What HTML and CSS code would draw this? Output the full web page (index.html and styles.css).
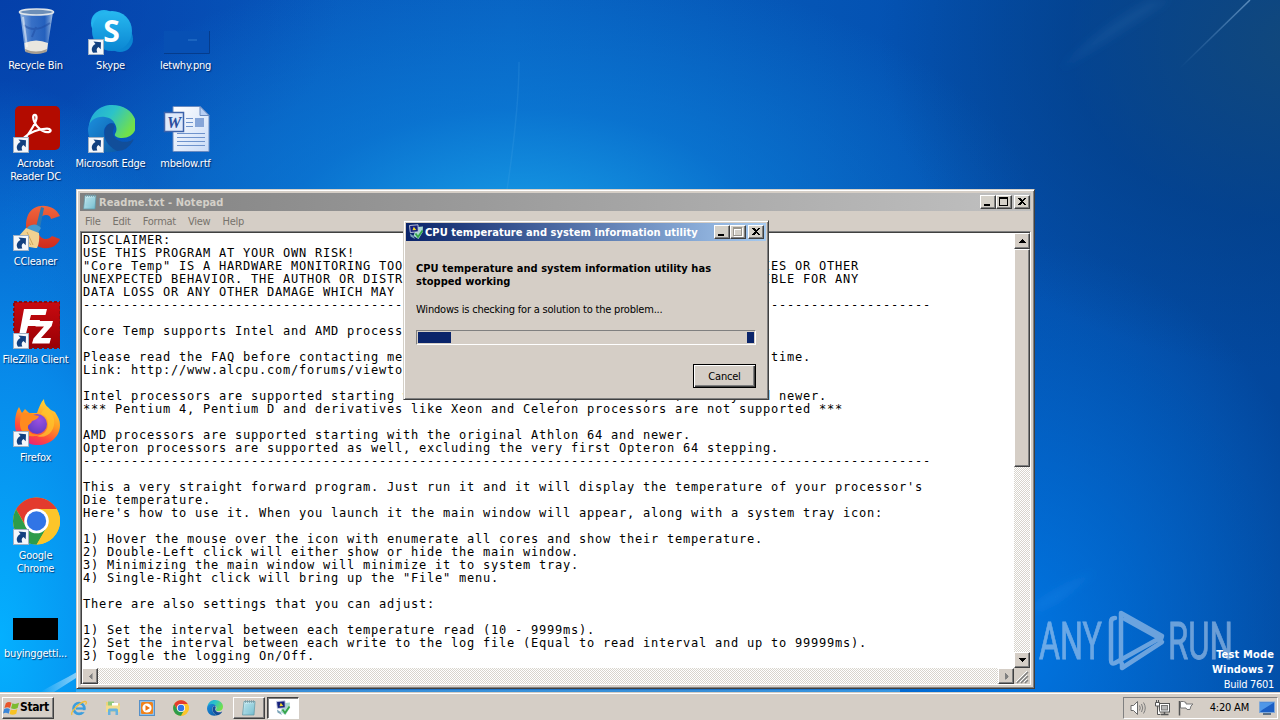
FILE: index.html
```html
<!DOCTYPE html>
<html lang="en">
<head>
    <meta charset="UTF-8">
    <title>Desktop</title>
    <link rel="stylesheet" href="styles.css">
</head>
<body>
<!-- shared icons -->
<svg class="defs" width="0" height="0">
    <defs>
        <linearGradient id="gSkype" x1="0" y1="0" x2="0" y2="1"><stop offset="0" stop-color="#27b9f0"/><stop offset="1" stop-color="#0b86d2"/></linearGradient>
        <linearGradient id="gGlass" x1="0" y1="0" x2="1" y2="0"><stop offset="0" stop-color="#bcd6f0" stop-opacity=".8"/><stop offset=".35" stop-color="#5b8fd8" stop-opacity=".6"/><stop offset=".75" stop-color="#3a74c8" stop-opacity=".6"/><stop offset="1" stop-color="#bcd3ec" stop-opacity=".9"/></linearGradient>
        <linearGradient id="gEdge1" x1="0" y1="0" x2="1" y2=".5"><stop offset="0" stop-color="#1fa6dc"/><stop offset=".5" stop-color="#2cc3c8"/><stop offset="1" stop-color="#72e04a"/></linearGradient>
        <linearGradient id="gEdge2" x1="0" y1="0" x2="1" y2="1"><stop offset="0" stop-color="#1c8fdd"/><stop offset="1" stop-color="#0c59a4"/></linearGradient>
        <linearGradient id="gFox" x1=".8" y1="0" x2=".3" y2="1"><stop offset="0" stop-color="#ffe13c"/><stop offset=".45" stop-color="#ff9a22"/><stop offset=".75" stop-color="#ff4a3c"/><stop offset="1" stop-color="#e5207c"/></linearGradient>
        <radialGradient id="gFox2" cx=".6" cy=".3" r=".8"><stop offset="0" stop-color="#9a50e0"/><stop offset="1" stop-color="#5b3bc0"/></radialGradient>
        <linearGradient id="gFz" x1="0" y1="0" x2="0" y2="1"><stop offset="0" stop-color="#c80a10"/><stop offset="1" stop-color="#980004"/></linearGradient>
        <linearGradient id="gCc" x1="0" y1="0" x2="0" y2="1"><stop offset="0" stop-color="#f0653c"/><stop offset="1" stop-color="#cf2b1e"/></linearGradient>
        <linearGradient id="gNote" x1="0" y1="0" x2="1" y2="1"><stop offset="0" stop-color="#d9f3f8"/><stop offset="1" stop-color="#6cb9cc"/></linearGradient>
        <linearGradient id="gDoc" x1="0" y1="0" x2="1" y2="1"><stop offset="0" stop-color="#ffffff"/><stop offset="1" stop-color="#c9dbf7"/></linearGradient>
    </defs>
    <symbol id="shortcut" viewBox="0 0 16 16">
        <rect x=".5" y=".5" width="15" height="15" fill="#f4f7fb" stroke="#9fb0c4"/>
        <path d="M5.500 2.500L13 3.200l-.3 7-2.200-2.200C8.500 9.300 8.300 11 9.300 13.500L5 13.800C2.800 10.500 3.600 7.200 7.500 5z" fill="#12407f"/>
    </symbol>
    <symbol id="chrome" viewBox="0 0 48 48">
        <circle cx="24" cy="24" r="23.500" fill="#fcc52a"/>
        <path d="M24 12H44.200A23.500 23.500 0 0 0 3.600 12.300L14 30z" fill="#e33b2e"/>
        <path d="M3.600 12.300L13.600 30 24 35.500l10-5-9.500 17A23.500 23.500 0 0 1 3.600 12.300z" fill="#2d9c4b"/>
        <path d="M44.200 12A23.500 23.500 0 0 1 24 47.500L34.500 30 34 12z" fill="#fcc52a"/>
        <circle cx="24" cy="24" r="12.300" fill="#fff"/>
        <circle cx="24" cy="24" r="9.700" fill="#3175e6"/>
    </symbol>
    <symbol id="edge" viewBox="0 0 48 48">
        <path d="M1 22C2 8 12 0 24 0c14 0 24 9 24 20 0 8-6 13-14 13-5 0-8-2-7-4 3-4 2-14-9-14C9 14 2 18 1 22z" fill="url(#gEdge1)"/>
        <path d="M0 24C1 15 9 11 17 12c6 1 9 4 10 7-5-3-12 2-11 10 1 9 7 15 16 16C16 52 0 42 0 24z" fill="url(#gEdge2)"/>
        <path d="M17 24c-2 8 2 17 12 22 8 0 13-5 16-10 1-2 0-2-1-1-4 3-17 3-19-6-1-4 2-5 1-9-3-3-7-1-9 4z" fill="#114e9a"/>
    </symbol>
    <symbol id="note" viewBox="0 0 16 16">
        <path d="M3 1.500L14 1.500 13 15 1.500 15z" fill="url(#gNote)" stroke="#5f97a5" stroke-width=".7"/>
        <path d="M4 5h8.500M3.800 7h8.500M3.600 9h8.500M3.400 11h8.500" stroke="#8ccbd9" stroke-width=".7"/>
        <path d="M4.500 0v3M6.500 0v3M8.500 0v3M10.500 0v3M12.500 0v3" stroke="#7d979f" stroke-width=".7"/>
    </symbol>
    <symbol id="coretemp" viewBox="0 0 16 16">
        <path d="M9.500 3l5.500-.5-.5 6-4 6.500L5.500 12l1-3z" fill="#a9d8cf"/>
        <path d="M7.500 9.500l2.500 3.500 4.500-6.500" fill="none" stroke="#35a548" stroke-width="1.800"/>
        <path d="M1.500 1.500L10 .8l.3 7-8 .7z" fill="#14207c" stroke="#c9cfe4" stroke-width=".9"/>
        <path d="M4.500 6.200l1.300-3.400L8.300 6z" fill="#f2d62c"/>
        <path d="M2 9.500l3.500 2.500 1.500 3-4.500-2.500z" fill="#79a3b8"/>
    </symbol>
    <symbol id="up" viewBox="0 0 7 4"><path d="M3 0h1v1h1v1h1v1h1v1H0V3h1V2h1V1h1z" shape-rendering="crispEdges"/></symbol>
</svg>

<div class="desktop">
    <svg class="wallpaper" viewBox="0 0 1280 692" preserveAspectRatio="none">
        <defs>
            <linearGradient id="beam" x1="0" y1="0" x2="1" y2="0"><stop offset="0" stop-color="#fff" stop-opacity="0"/><stop offset="1" stop-color="#d8f4ff" stop-opacity=".8"/></linearGradient>
            <linearGradient id="ray" gradientUnits="userSpaceOnUse" x1="1180" y1="68" x2="1250" y2="0"><stop offset="0" stop-color="#6fa4d8" stop-opacity="0"/><stop offset="1" stop-color="#8fbbe4" stop-opacity=".6"/></linearGradient>
            <filter id="soft"><feGaussianBlur stdDeviation="4"/></filter>
        </defs>
        <path d="M507 190C513 150 519 105 519 62" fill="none" stroke="#55aeea" stroke-opacity=".18" stroke-width="1.500"/>
        <path d="M1180 68L1250 0" stroke="url(#ray)" stroke-width="1.500"/>
        <path d="M1060 70Q1100 25 1150 0h20Q1110 40 1060 70z" fill="#3f86c8" fill-opacity=".14" filter="url(#soft)"/>
        <path d="M40 692C62 680 76 673 90 664L90 669Q70 682 54 692z" fill="url(#beam)"/>
        <path d="M1035 604Q1065 584 1095 572L1060 600 1035 612z" fill="#2c90ee" fill-opacity=".25" filter="url(#soft)"/>
        <path d="M76 691H900" stroke="#6cc4f4" stroke-opacity=".5" stroke-width="3"/>
    </svg>

    <div class="icons">
        <div class="icon">
            <svg viewBox="0 0 48 48">
                <path d="M8 5L13 44Q24 49 35 44L41 5z" fill="url(#gGlass)"/>
                <path d="M12.500 36Q24 31 36 36L35 44Q24 49 13 44z" fill="#e9e6df"/>
                <path d="M13 42Q24 47 35 42l-.5 3Q24 49 13.500 45z" fill="#a59c90"/>
                <path d="M12 18q10 9 26-2M24 20l-4 10" fill="none" stroke="#1d4aa0" stroke-opacity=".5" stroke-width="2"/>
                <ellipse cx="24.500" cy="5" rx="17" ry="3" fill="#6d8fb8" stroke="#dfe5ea" stroke-width="1.600"/>
                <path d="M11 10l4 30" stroke="#fff" stroke-opacity=".5" stroke-width="2"/>
            </svg>
            <span>Recycle Bin</span>
        </div>
        <div class="icon">
            <svg viewBox="0 0 48 48">
                <rect x="3" y="1" width="45" height="44" rx="5" fill="#b30b00"/>
                <path d="M12 35C18 27 24 19 24.500 13c.2-4-3.600-4-3.300-.5.500 7 8.500 15.500 15.500 14.500 3.300-.6 2-3.300-1.700-3.300-8 0-18 4-22.500 8.500-2.500 2.800 0 4.200 2.500 1" fill="none" stroke="#fff" stroke-width="2.300"/>
                <use href="#shortcut" x="1" y="32" width="16" height="16"/>
            </svg>
            <span>Acrobat<br>Reader DC</span>
        </div>
        <div class="icon">
            <svg viewBox="0 0 48 48">
                <path d="M48 13C42 0 22-1 16 12c-6 14 2 31 15 33 8 1 14-2 17-9l-8-3c-4 5-12 4-14-4-2-9 2-17 8-17 3 0 4 1 5 4z" fill="url(#gCc)"/>
                <path d="M29 4l3 1-4 20-4-1z" fill="#2a78b4"/>
                <path d="M17 23q7-4 12 2l-3 5-12-4z" fill="#4699cf"/>
                <path d="M14 25l13 5q1 9-2 15-12 1-19-11z" fill="#f1d291"/>
                <path d="M11 32l8 10M15 29l6 13" stroke="#cfa55a" stroke-width="1"/>
                <use href="#shortcut" x="1" y="32" width="16" height="16"/>
            </svg>
            <span>CCleaner</span>
        </div>
        <div class="icon">
            <svg viewBox="0 0 48 48">
                <rect x="2" y="1" width="46" height="46" fill="url(#gFz)" stroke="#8d0b10" stroke-width="2" stroke-dasharray="3 2"/>
                <path d="M12 8h23l-1.500 6H19l-1.300 5H28l-1.500 6H16l-4 15H6z" fill="#fff"/>
                <path d="M25 20h16l-1.300 5L29 37h10l-1.500 5.500H20l1.500-5L32 25.500h-8.500z" fill="#fff"/>
                <use href="#shortcut" x="1" y="32" width="16" height="16"/>
            </svg>
            <span>FileZilla Client</span>
        </div>
        <div class="icon">
            <svg viewBox="0 0 48 48">
                <path d="M3 26C3 18 4 13 7 8l3 6 3-4 4 4 8 0C27 8 29 3 32 0c0 6 4 8 7 11l4 2c3 5 5 8 5 13 0 12-10 20-22 20S3 38 3 26z" fill="url(#gFox)"/>
                <circle cx="25" cy="25" r="10" fill="url(#gFox2)"/>
                <path d="M9 14c6 0 9-1 13 2l5 1c-1 3-4 4-7 5-1 3-3 3-4 5-1 6 5 10 11 8-9 6-20 0-19-12z" fill="#ff8a1e"/>
                <path d="M29 15c5 1 7 5 7 10 0 8-7 13-14 11 12 6 22-4 20-16-1-5-5-8-7-12-3 2-5 4-6 7z" fill="#ffc42c" fill-opacity=".75"/>
                <use href="#shortcut" x="1" y="32" width="16" height="16"/>
            </svg>
            <span>Firefox</span>
        </div>
        <div class="icon">
            <svg viewBox="0 0 48 48">
                <use href="#chrome" x="0.500" y="0" width="48" height="48"/>
                <use href="#shortcut" x="1" y="32" width="16" height="16"/>
            </svg>
            <span>Google<br>Chrome</span>
        </div>
        <div class="icon">
            <svg viewBox="0 0 48 48"><rect x="1" y="23" width="45" height="22" fill="#000"/></svg>
            <span>buyinggetti...</span>
        </div>

        <div class="icon col2 row1">
            <svg viewBox="0 0 48 48">
                <circle cx="17" cy="16" r="13" fill="#23b4ee"/>
                <circle cx="33" cy="32" r="13" fill="#0b86d2"/>
                <circle cx="25" cy="24" r="20" fill="url(#gSkype)"/>
                <text class="skype-s" x="24.500" y="34.500">S</text>
                <use href="#shortcut" x="1" y="32" width="16" height="16"/>
            </svg>
            <span>Skype</span>
        </div>
        <div class="icon col2 row2">
            <svg viewBox="0 0 48 48">
                <use href="#edge" x="1" y="0" width="48" height="48"/>
                <use href="#shortcut" x="1" y="32" width="16" height="16"/>
            </svg>
            <span>Microsoft Edge</span>
        </div>

        <div class="icon col3 row1">
            <svg viewBox="0 0 48 48">
                <rect x="2" y="24" width="45" height="22" fill="#0750b4"/>
                <path d="M2 46.500h45.500V24" fill="none" stroke="#053c8c"/>
                <path d="M26 33h9" stroke="#2f78cc"/>
            </svg>
            <span>letwhy.png</span>
        </div>
        <div class="icon col3 row2">
            <svg viewBox="0 0 48 48">
                <path d="M11 1.500h27l9 9V46.500H11z" fill="url(#gDoc)" stroke="#6a8bc0"/>
                <path d="M38 1.500v9h9z" fill="#b9cff3" stroke="#6a8bc0"/>
                <path d="M24 13.500h7M24 17.500h7M24 21.500h7M15 28.500h28M15 32.500h28M15 36.500h28M15 40.500h28" stroke="#6f93cc"/>
                <rect x="33" y="13" width="9" height="9" fill="#86a5d8"/>
                <rect x="2.500" y="7.500" width="19" height="19" fill="#dfe9fa" stroke="#3d63ab" stroke-width="1.500"/>
                <text class="word-w" x="12" y="23">W</text>
            </svg>
            <span>mbelow.rtf</span>
        </div>
    </div>

    <svg class="watermark" viewBox="0 0 200 70">
        <text x="0" y="53" textLength="63" lengthAdjust="spacingAndGlyphs">ANY</text>
        <text x="129" y="53" textLength="65" lengthAdjust="spacingAndGlyphs">RUN</text>
        <g fill="none" stroke-width="4.500" stroke-linejoin="round" stroke-linecap="round">
            <path d="M82 56V7L123 30l-1 3L86 13"/>
            <path d="M76 12q-4 0-4 4v38q0 5 4 3l45-25"/>
            <path d="M119 33l4 3L83 62v-4"/>
        </g>
    </svg>
    <div class="build">
        <b>Test Mode</b>
        <b>Windows 7</b>
        <span>Build 7601</span>
    </div>

    <div class="window notepad">
        <div class="titlebar">
            <svg class="title-icon" viewBox="0 0 16 16"><use href="#note"/></svg>
            <span class="title">Readme.txt - Notepad</span>
            <button class="btn"><svg viewBox="0 0 12 10"><path d="M2 7h6v2H2z"/></svg></button>
            <button class="btn"><svg viewBox="0 0 12 10"><path d="M1 0h9v9H1zM2 2v6h7V2z" fill-rule="evenodd"/></svg></button>
            <button class="btn close"><svg viewBox="0 0 12 10"><path d="M2 1h2l2 2 2-2h2L7 4.500 10 8H8L6 6 4 8H2l3-3.500z"/></svg></button>
        </div>
        <div class="menu">
            <span>File</span><span>Edit</span><span>Format</span><span>View</span><span>Help</span>
        </div>
        <div class="editor">
<pre class="text">DISCLAIMER:
USE THIS PROGRAM AT YOUR OWN RISK!
"Core Temp" IS A HARDWARE MONITORING TOOL, EXECUTING IT COULD CAUSE SYSTEM INSTABILITIES OR OTHER
UNEXPECTED BEHAVIOR. THE AUTHOR OR DISTRIBUTORS OF THIS SOFTWARE ARE NOT HELD RESPONSIBLE FOR ANY
DATA LOSS OR ANY OTHER DAMAGE WHICH MAY OCCUR.
----------------------------------------------------------------------------------------------------------

Core Temp supports Intel and AMD processors.

Please read the FAQ before contacting me with questions. It will save you and me some time.
Link: http://www.alcpu.com/forums/viewtopic.php?f=63&amp;t=892

Intel processors are supported starting with the Core family (Core Duo, i7) family and newer.
*** Pentium 4, Pentium D and derivatives like Xeon and Celeron processors are not supported ***

AMD processors are supported starting with the original Athlon 64 and newer.
Opteron processors are supported as well, excluding the very first Opteron 64 stepping.
----------------------------------------------------------------------------------------------------------

This a very straight forward program. Just run it and it will display the temperature of your processor's
Die temperature.
Here's how to use it. When you launch it the main window will appear, along with a system tray icon:

1) Hover the mouse over the icon with enumerate all cores and show their temperature.
2) Double-Left click will either show or hide the main window.
3) Minimizing the main window will minimize it to system tray.
4) Single-Right click will bring up the "File" menu.

There are also settings that you can adjust:

1) Set the interval between each temperature read (10 - 9999ms).
2) Set the interval between each write to the log file (Equal to read interval and up to 99999ms).
3) Toggle the logging On/Off.</pre>
            <div class="vscroll">
                <div class="sbtn"><svg width="7" height="4"><use href="#up"/></svg></div>
                <div class="thumb"></div>
                <div class="track"></div>
                <div class="sbtn down"><svg width="7" height="4"><use href="#up"/></svg></div>
            </div>
            <div class="hscroll">
                <div class="sbtn left"><svg width="7" height="4"><use href="#up"/></svg></div>
                <div class="track"></div>
                <div class="sbtn right"><svg width="7" height="4"><use href="#up"/></svg></div>
            </div>
            <svg class="grip" viewBox="0 0 16 16"><path d="M3 15L14 4M7 15l7-7M11 15l3-3" stroke="#808080" stroke-width="1.500"/><path d="M2 14L13 3M6 14l7-7M10 14l3-3" stroke="#fff"/></svg>
        </div>
    </div>

    <div class="window dialog">
        <div class="titlebar">
            <svg class="title-icon" viewBox="0 0 16 16"><use href="#coretemp"/></svg>
            <span class="title">CPU temperature and system information utility</span>
            <button class="btn"><svg viewBox="0 0 12 10"><path d="M2 7h6v2H2z"/></svg></button>
            <button class="btn off"><svg viewBox="0 0 12 10"><path d="M1 0h9v9H1zM2 2v6h7V2z" fill-rule="evenodd"/></svg></button>
            <button class="btn close"><svg viewBox="0 0 12 10"><path d="M2 1h2l2 2 2-2h2L7 4.500 10 8H8L6 6 4 8H2l3-3.500z"/></svg></button>
        </div>
        <div class="dialog-body">
            <h4>CPU temperature and system information utility has<br>stopped working</h4>
            <p>Windows is checking for a solution to the problem...</p>
            <div class="progress"><i class="head"></i><i class="tail"></i></div>
            <button class="cancel">Cancel</button>
        </div>
    </div>
</div>

<div class="taskbar">
    <button class="start">
        <svg viewBox="0 0 18 16">
            <path d="M3 3q3-2.500 6-.5L7.500 8Q5 6.500 1.500 8z" fill="#e8552a"/>
            <path d="M10 3q3 1.500 7-.5L15.500 8q-3.500 2-7 .3z" fill="#7cbb2f"/>
            <path d="M1.300 9q3.200-1.500 6 .2L6 14q-3-2-6-.3z" fill="#3a86d8"/>
            <path d="M8.200 9.500q3.500 1.500 7-.4L14 14q-3.500 2-7 .3z" fill="#f8c224"/>
        </svg>
        <span>Start</span>
    </button>
    <div class="quick">
        <svg viewBox="0 0 16 16">
            <circle cx="8" cy="8.500" r="5.400" fill="none" stroke="#3c9ede" stroke-width="2.800"/>
            <path d="M5 8.500h9" stroke="#3c9ede" stroke-width="2.200"/>
            <path d="M10.500 11.200h4.500" stroke="#d5cec6" stroke-width="2"/>
            <path d="M1 15C-1 12 8 3 13.500 1.500 16 1 15.500 3 14.500 4.500" fill="none" stroke="#f0be3c" stroke-width="1.300"/>
        </svg>
        <svg viewBox="0 0 16 16">
            <path d="M1 2h5l1 1.500h8V11H1z" fill="#ecd27c"/>
            <path d="M3 1.500h6v5H3z" fill="#8fc97a"/><path d="M7 3h6v4H7z" fill="#fff"/>
            <path d="M1 5.500h14V12H1z" fill="#f3dc8c"/>
            <path d="M3 15V10q0-1.500 1.500-1.500h7Q13 8.500 13 10v5h-2.500v-3.500h-5V15z" fill="#67b3df"/>
        </svg>
        <svg viewBox="0 0 16 16">
            <rect x=".5" y=".5" width="15" height="15" fill="#8fbfe8" stroke="#5590c8"/>
            <rect x="2" y="2" width="12" height="12" rx="1.500" fill="#f0831c"/>
            <circle cx="8" cy="8" r="4.600" fill="#fff"/><path d="M6.500 5.300v5.400L11 8z" fill="#ec7310"/>
        </svg>
        <svg viewBox="0 0 16 16"><use href="#chrome"/></svg>
        <svg viewBox="0 0 16 16"><use href="#edge"/></svg>
    </div>
    <div class="task"><svg viewBox="0 0 16 16"><use href="#note"/></svg></div>
    <div class="task active"><svg viewBox="0 0 16 16"><use href="#coretemp"/></svg></div>
    <div class="tray">
        <svg viewBox="0 0 16 16">
            <path d="M1 5.500h2.500L7.500 1.500v13L3.500 10.500H1z" fill="#fff" stroke="#6b6b6b"/>
            <path d="M9.500 5.500q1.500 2.500 0 5M11.500 4q2.500 4 0 8M13.500 2.500q3.500 5.500 0 11" fill="none" stroke="#7d7d7d"/>
        </svg>
        <svg viewBox="0 0 16 16">
            <rect x="5.500" y="3.500" width="10" height="8.500" fill="#fff" stroke="#555"/><rect x="7.500" y="5.500" width="6" height="4.500" fill="#b8b8b8" stroke="#777"/>
            <path d="M7 14.500h7.500M10.500 12v2.500" stroke="#555" stroke-width="1.500"/>
            <path d="M1.500 2.500h4V6h-4zM2.500 0v2M4.500 0v2M3.500 6v8.500h3" fill="#fff" stroke="#555"/>
        </svg>
        <svg viewBox="0 0 16 16">
            <path d="M1.500 1v14.500" stroke="#555" stroke-width="1.500"/>
            <path d="M2.500 1.500q3-.5 5.500 1v1.500h7l-2 2-1 3.500H9L8 8H2.500z" fill="#fff" stroke="#777"/>
        </svg>
        <span class="clock">4:20 AM</span>
        <svg class="show" viewBox="0 0 16 14">
            <rect x=".5" y="1" width="15" height="10.500" fill="#1b5fc4" stroke="#7fa8d8"/>
            <path d="M1 1.500h14L3 9 1 11z" fill="#4e97e8"/><path d="M4 13h8" stroke="#32506f" stroke-width="1.500"/>
        </svg>
    </div>
</div>
</body>
</html>
```
FILE: styles.css
```css
* {
    box-sizing: border-box;
}
body {
    margin: 0;
    width: 1280px;
    height: 720px;
    overflow: hidden;
    display: flex;
    flex-direction: column;
    font-family: "DejaVu Sans Condensed", "DejaVu Sans", sans-serif;
    font-size: 11px;
    line-height: 13px;
}
.defs {
    position: absolute;
}
svg {
    display: block;
    flex: none;
}
button {
    font: inherit;
    padding: 0;
    margin: 0;
    color: #000;
    border-radius: 0;
}

/* desktop */
.desktop {
    position: relative;
    height: 692px;
    overflow: hidden;
    background:
        radial-gradient(ellipse 420px 330px at 1300px 40px, rgba(18, 72, 122, .95), rgba(4, 62, 132, .6) 55%, rgba(4, 62, 132, 0)),
        radial-gradient(ellipse 520px 270px at 520px 230px, rgba(24, 160, 232, .95), rgba(12, 130, 220, .6) 45%, rgba(10, 110, 210, 0)),
        radial-gradient(ellipse 260px 560px at 0 640px, rgba(4, 176, 255, 1), rgba(8, 150, 245, .8) 50%, rgba(8, 120, 225, 0)),
        radial-gradient(ellipse 330px 400px at 1010px 640px, rgba(0, 122, 232, .9), rgba(0, 100, 215, 0)),
        radial-gradient(ellipse 340px 220px at 0 0, rgba(4, 62, 168, .9), rgba(6, 62, 168, 0)),
        linear-gradient(90deg, #0650b8 0%, #0860c0 40%, #0452b2 70%, #03479c 100%);
}
.wallpaper {
    width: 1280px;
    height: 692px;
}
.icons {
    position: absolute;
    left: -2px;
    top: 7px;
    display: grid;
    grid-template-columns: repeat(3, 75px);
    grid-template-rows: repeat(7, 98px);
    grid-auto-flow: column;
}
.icon {
    display: flex;
    flex-direction: column;
    align-items: center;
    gap: 4px;
    color: #fff;
    text-align: center;
    white-space: nowrap;
    letter-spacing: -.22px;
}
.icon span {
    text-shadow: 1px 1px 1px rgba(0, 20, 70, .7);
}
.icon svg {
    width: 48px;
    height: 48px;
}
.col2 {
    grid-column: 2;
}
.col3 {
    grid-column: 3;
}
.row1 {
    grid-row: 1;
}
.row2 {
    grid-row: 2;
}
.skype-s {
    font: bold 30px "Open Sans", sans-serif;
    fill: #fff;
    text-anchor: middle;
}
.word-w {
    font: italic bold 16px "Liberation Serif", serif;
    fill: #2b4f9c;
    text-anchor: middle;
}
.watermark {
    position: absolute;
    left: 1039px;
    top: 606px;
    width: 200px;
    height: 70px;
    opacity: .5;
    stroke: #d4e2f4;
}
.watermark text {
    font: 400 52px Roboto, sans-serif;
    fill: #d4e2f4;
    stroke-width: .8px;
}
.build {
    position: absolute;
    right: 6px;
    top: 648px;
    display: flex;
    flex-direction: column;
    align-items: flex-end;
    line-height: 14.500px;
    color: #fff;
}
.build b {
    letter-spacing: .15px;
}
.build span {
    line-height: 16px;
    letter-spacing: -.3px;
}

/* windows */
.window {
    position: absolute;
    display: flex;
    flex-direction: column;
    background: #d5cec6;
    border: 1px solid;
    border-color: #d4d0c8 #404040 #404040 #d4d0c8;
    box-shadow: inset 1px 1px #fff, inset -1px -1px #808080;
}
.notepad {
    left: 76px;
    top: 189px;
    width: 959px;
    height: 500px;
    padding: 3px;
}
.dialog {
    left: 403px;
    top: 220px;
    width: 366px;
    height: 180px;
    padding: 2px;
}
.titlebar {
    display: flex;
    align-items: center;
    height: 18px;
    padding-right: 1px;
    background: linear-gradient(90deg, #808080, #c0c0c0);
    color: #d4d0c8;
    font-weight: bold;
    white-space: nowrap;
    letter-spacing: .07px;
}
.dialog .titlebar {
    padding-right: 2px;
    background: linear-gradient(90deg, #0a246a, #a6caf0);
    color: #fff;
}
.title-icon {
    width: 16px;
    height: 16px;
    margin: 0 1px 0 2px;
}
.title {
    flex: 1;
}
.btn {
    width: 16px;
    height: 14px;
    background: #d4d0c8;
    border: 1px solid;
    border-color: #fff #404040 #404040 #fff;
    box-shadow: inset -1px -1px #808080;
}
.btn svg {
    width: 12px;
    height: 10px;
    margin: 1px;
    shape-rendering: crispEdges;
}
.btn.close {
    margin-left: 2px;
}
.btn.off svg {
    fill: #9a968e;
    filter: drop-shadow(1px 1px #fff);
}
.menu {
    display: flex;
    gap: 12px;
    height: 20px;
    padding-left: 5px;
    line-height: 21px;
    letter-spacing: -.25px;
    color: #77736c;
}
.editor {
    flex: 1;
    display: grid;
    grid-template-columns: 1fr 16px;
    grid-template-rows: 1fr 16px;
    border: 1px solid;
    border-color: #808080 #fff #fff #808080;
    box-shadow: inset 1px 1px #404040;
    padding: 1px 0 0 1px;
    background: #fff;
    min-height: 0;
}
.text {
    margin: 0;
    padding: 1px 0 0 1px;
    font: 12px/13px "DejaVu Sans Mono", monospace;
    letter-spacing: .776px;
    color: #000;
    overflow: hidden;
    min-height: 0;
}
.vscroll {
    display: flex;
    flex-direction: column;
}
.hscroll {
    display: flex;
}
.track {
    flex: 1;
    background: repeating-conic-gradient(#fff 0 25%, #d8d4cc 0 50%) 0 0 / 2px 2px;
}
.sbtn, .thumb {
    display: flex;
    align-items: center;
    justify-content: center;
    width: 16px;
    height: 16px;
    background: #d5cec6;
    border: 1px solid;
    border-color: #fff #404040 #404040 #fff;
    box-shadow: inset -1px -1px #808080;
}
.thumb {
    height: 218px;
}
.down svg {
    transform: rotate(180deg);
}
.left svg {
    transform: rotate(-90deg);
    fill: #808080;
}
.right svg {
    transform: rotate(90deg);
    fill: #808080;
}
.grip {
    width: 16px;
    height: 16px;
    background: #d5cec6;
}

/* dialog */
.dialog-body {
    display: flex;
    flex-direction: column;
    padding: 21px 10px 0 10px;
}
.dialog-body h4 {
    margin: 0;
    font-size: 11px;
    letter-spacing: .05px;
}
.dialog-body p {
    margin: 15px 0 14px;
    letter-spacing: -.2px;
}
.progress {
    display: flex;
    justify-content: space-between;
    height: 15px;
    padding: 1px;
    border: 1px solid;
    border-color: #808080 #fff #fff #808080;
}
.progress i {
    background: #0a246a;
}
.head {
    width: 33px;
}
.tail {
    width: 7px;
}
.cancel {
    align-self: flex-end;
    width: 63px;
    height: 24px;
    margin-top: 19px;
    background: #d5cec6;
    border: 1px solid #000;
    box-shadow: inset 1px 1px #fff, inset -1px -1px #404040, inset -2px -2px #808080;
    letter-spacing: -.2px;
}

/* taskbar */
.taskbar {
    display: flex;
    align-items: center;
    height: 28px;
    padding: 2px 2px 0;
    background: #d5cec6;
    border-top: 1px solid #d5cec6;
    box-shadow: inset 0 1px #fff;
}
.start {
    display: flex;
    align-items: center;
    width: 52px;
    height: 22px;
    background: #d5cec6;
    border: 1px solid;
    border-color: #fff #404040 #404040 #fff;
    box-shadow: inset -1px -1px #808080;
    font-weight: bold;
    font-size: 12px;
    letter-spacing: -.4px;
}
.start svg {
    width: 17px;
    height: 16px;
}
.quick {
    display: flex;
    gap: 18px;
    margin: 0 10px 0 17px;
}
.quick svg, .task svg, .tray svg {
    width: 16px;
    height: 16px;
}
.task {
    display: flex;
    align-items: center;
    justify-content: center;
    width: 32px;
    height: 22px;
    border: 1px solid;
    border-color: #fff #404040 #404040 #fff;
    box-shadow: inset -1px -1px #808080;
    margin-right: 2px;
}
.task.active {
    border-color: #404040 #fff #fff #404040;
    box-shadow: inset 1px 1px #808080;
    background: #fff;
}
.tray {
    display: flex;
    align-items: center;
    gap: 8px;
    height: 22px;
    margin-left: auto;
    padding: 0 2px 0 6px;
    border: 1px solid;
    border-color: #808080 #fff #fff #808080;
}
.clock {
    margin: 0 2px 0 8px;
    letter-spacing: -.2px;
}
```
